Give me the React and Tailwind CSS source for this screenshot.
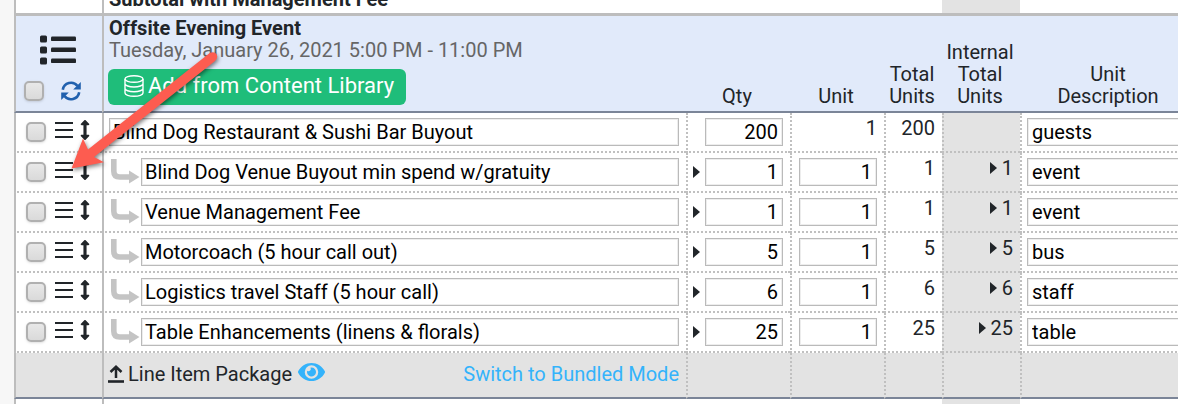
import React from 'react';
import { FaArrowsAltV, FaEye } from 'react-icons/fa';

const items = [
  { id: 1, name: 'Blind Dog Restaurant & Sushi Bar Buyout', qty: '200', unit: '1', total: '200', desc: 'guests', parent: true },
  { id: 2, name: 'Blind Dog Venue Buyout min spend w/gratuity', qty: '1', unit: '1', total: '1', desc: 'event' },
  { id: 3, name: 'Venue Management Fee', qty: '1', unit: '1', total: '1', desc: 'event' },
  { id: 4, name: 'Motorcoach (5 hour call out)', qty: '5', unit: '1', total: '5', desc: 'bus' },
  { id: 5, name: 'Logistics travel Staff (5 hour call)', qty: '6', unit: '1', total: '6', desc: 'staff' },
  { id: 6, name: 'Table Enhancements (linens & florals)', qty: '25', unit: '1', total: '25', desc: 'table' }
];

const field = 'block h-7 border border-[#bababa] bg-white text-black shadow-[inset_0_0_0_1px_#ededed] outline-none';
const solid = 'border-l-2 border-[#bdbdbd]';
const dotted = 'border-l-2 border-l-[#c0c0c0] [border-left-style:dotted]';
const rowLine = 'border-b-2 border-b-[#c0c0c0] [border-bottom-style:dotted]';
const headLine = 'border-b-2 border-b-[#7b8598]';

const Tick = ({ label }) => (
  <input
    type="checkbox"
    aria-label={label}
    className="size-5 shrink-0 appearance-none rounded-[5px] border-2 border-[#b0b0b0] bg-linear-to-b from-[#e8e8e8] to-[#dadada] shadow-sm"
  />
);

const Caret = () => (
  <svg viewBox="0 0 7 12" className="h-3 w-[7px] shrink-0 fill-[#212529]" aria-hidden="true">
    <path d="M0 0L7 6L0 12Z" />
  </svg>
);

const ListIcon = () => (
  <svg viewBox="0 0 36 30" className="h-[30px] w-9 fill-[#212529]" aria-hidden="true">
    {[2, 13, 24].map((y) => (
      <g key={y}>
        <rect x="0" y={y - 1.5} width="7" height="7" rx="1.5" />
        <rect x="11" y={y - 0.5} width="25" height="4.6" rx="1.2" />
      </g>
    ))}
  </svg>
);

const RefreshIcon = () => (
  <svg viewBox="0 0 20 20" className="size-5" aria-hidden="true">
    <path d="M1.800 8.800A8.300 8.300 0 0 1 16.500 5M18.200 11.200A8.300 8.300 0 0 1 3.500 15" fill="none" stroke="#2161ae" strokeWidth="2.600" />
    <path d="M19.800 1v7.600h-7.600zM0.200 19v-7.600h7.600z" fill="#2161ae" />
  </svg>
);

const BarsIcon = () => (
  <svg viewBox="0 0 18 16" className="h-4 w-[18px] fill-[#212529]" aria-hidden="true">
    <path d="M0 0h18v2H0zM0 7h18v2H0zM0 14h18v2H0z" />
  </svg>
);

const DatabaseIcon = () => (
  <svg viewBox="0 0 20 22" className="h-[22px] w-5 shrink-0 fill-none stroke-white" strokeWidth="1.4" aria-hidden="true">
    <ellipse cx="10" cy="4" rx="9" ry="3.3" />
    <path d="M1 4v14c0 1.800 4 3.300 9 3.300s9-1.500 9-3.300V4M1 8.700c0 1.800 4 3.300 9 3.300s9-1.500 9-3.300M1 13.400c0 1.800 4 3.300 9 3.300s9-1.500 9-3.300" />
  </svg>
);

const ChildArrow = () => (
  <svg viewBox="0 0 31 27" className="h-[27px] w-[31px] shrink-0" aria-hidden="true">
    <path d="M4.800 0v12q0 6 6 6H21" fill="none" stroke="#c4c4c4" strokeWidth="5.600" />
    <path d="M20 11.500L30.500 18L20 24.500z" fill="#c4c4c4" />
  </svg>
);

const UploadIcon = () => (
  <svg viewBox="0 0 16 18" className="h-[18px] w-4 shrink-0" fill="none" stroke="#212529" aria-hidden="true">
    <path d="M8 13V2M2.500 7L8 1.800L13.500 7" strokeWidth="2.500" />
    <path d="M0 16.500h16" strokeWidth="2.600" />
  </svg>
);

const Pointer = () => (
  <svg viewBox="0 0 160 130" className="pointer-events-none absolute left-[65px] top-[48px] h-[130px] w-[160px] drop-shadow-[1px_2px_2px_rgba(0,0,0,0.5)]" aria-hidden="true">
    <path d="M6.500 120.500L18 90.500L23 101.500L145 4.800Q149 3 151.500 6Q153.500 10 150 13L29 109L39 114.300Z" fill="#fd5c50" />
  </svg>
);

const LineItem = ({ item }) => (
  <tr className="h-10">
    <td className={`${solid} ${rowLine} pl-[10px]`}>
      <div className="flex items-center pb-px">
        <Tick label={`Select ${item.name}`} />
        <button type="button" aria-label="Options" className="ml-[9px] mb-[3px]">
          <BarsIcon />
        </button>
        <button type="button" aria-label="Move" className="ml-1 mb-[3px]">
          <FaArrowsAltV className="h-5 w-4 text-[#212529]" />
        </button>
      </div>
    </td>
    <td className={`${solid} ${rowLine} pr-[7px] pl-[5px]`}>
      <div className="flex items-center">
        {!item.parent && <div className="w-8 shrink-0"><ChildArrow /></div>}
        <input aria-label="Item name" defaultValue={item.name} className={`${field} w-full min-w-0 flex-1 px-[3px]`} />
      </div>
    </td>
    <td className={`${dotted} ${rowLine} pr-[7px] pl-[5px]`}>
      <div className="flex items-center justify-end gap-[5px]">
        {!item.parent && <Caret />}
        <input aria-label="Qty" defaultValue={item.qty} className={`${field} w-[78px] px-1 text-right`} />
      </div>
    </td>
    <td className={`${dotted} ${rowLine} px-[7px] ${item.parent ? 'pb-2 text-right' : ''}`}>
      {item.parent ? item.unit : <input aria-label="Unit" defaultValue={item.unit} className={`${field} w-full px-1 text-right`} />}
    </td>
    <td className={`${dotted} ${rowLine} pr-[7px] pb-2 text-right`}>{item.total}</td>
    <td className={`${dotted} ${rowLine} bg-[#e3e3e3] pr-[7px] pb-2`}>
      {!item.parent && (
        <div className="flex items-center justify-end gap-[5px]">
          <Caret />
          {item.total}
        </div>
      )}
    </td>
    <td className={`${dotted} ${rowLine} px-[5px]`}>
      <input aria-label="Unit description" defaultValue={item.desc} className={`${field} w-full px-1`} />
    </td>
  </tr>
);

const App = () => (
  <div className="relative overflow-hidden bg-[#f7f7f7] pl-[14px] font-[Roboto,sans-serif] text-[20px] leading-[22px] text-[#212529]">
    <table className="w-full min-w-[1182px] table-fixed border-separate border-spacing-0 bg-white">
      <colgroup>
        <col className="w-[88px]" />
        <col />
        <col className="w-[104px]" />
        <col className="w-[94px]" />
        <col className="w-[58px]" />
        <col className="w-[78px]" />
        <col className="w-[176px]" />
      </colgroup>
      <tbody>
        <tr>
          <td className={`${solid} border-b-[3px]`}></td>
          <td className={`${solid} border-b-[3px] pl-[5px]`}>
            <div className="flex h-[13px] items-end overflow-hidden pb-[3px]">
              <strong className="font-bold">Subtotal with Management Fee</strong>
            </div>
          </td>
          <td colSpan={3} className="border-b-[3px] border-[#bdbdbd]"></td>
          <td className="border-b-[3px] border-[#bdbdbd] bg-[#e3e3e3]"></td>
          <td className="border-b-[3px] border-[#bdbdbd]"></td>
        </tr>
        <tr className="bg-[#e1eafa] align-bottom">
          <td className={`${solid} ${headLine} px-2 pb-[10px]`}>
            <div className="flex justify-center pr-[2px]">
              <ListIcon />
            </div>
            <div className="mt-4 flex items-center gap-[17px]">
              <Tick label="Select all items" />
              <button type="button" aria-label="Refresh">
                <RefreshIcon />
              </button>
            </div>
          </td>
          <td className={`${solid} ${headLine} pt-px pb-[6px] pl-[4px] text-left`}>
            <div className="pl-px font-bold">Offsite Evening Event</div>
            <div className="pl-px text-[#666666]">Tuesday, January 26, 2021 5:00 PM - 11:00 PM</div>
            <button type="button" className="mt-2 flex h-9 items-center gap-1 rounded-md bg-[#1fbd7a] pr-3 pb-[2px] pl-4 text-[22px] text-white">
              <DatabaseIcon />
              Add from Content Library
            </button>
          </td>
          <th scope="col" className={`${headLine} pr-[2px] pb-1 font-normal`}>Qty</th>
          <th scope="col" className={`${headLine} pr-[2px] pb-1 font-normal`}>Unit</th>
          <th scope="col" className={`${headLine} pr-[2px] pb-1 font-normal`}>Total Units</th>
          <th scope="col" className={`${headLine} pr-[2px] pb-1 font-normal`}>Internal Total Units</th>
          <th scope="col" className={`${headLine} px-6 pb-1 font-normal`}>Unit Description</th>
        </tr>
        {items.map((item) => (
          <LineItem key={item.id} item={item} />
        ))}
        <tr className="h-[46px] bg-[#e3e3e3]">
          <td className={`${solid} ${headLine}`}></td>
          <td className={`${solid} ${headLine} pr-[7px] pb-[3px] pl-1`}>
            <div className="flex items-center">
              <UploadIcon />
              <span className="ml-1">Line Item Package</span>
              <button type="button" aria-label="Preview package" className="ml-[6px] mb-[3px]">
                <FaEye className="h-6 w-[27px] text-[#34b3fb]" />
              </button>
              <a href="#bundled" className="ml-auto text-[#34b3fb]">Switch to Bundled Mode</a>
            </div>
          </td>
          <td className={`${dotted} ${headLine}`}></td>
          <td className={`${dotted} ${headLine}`}></td>
          <td className={`${dotted} ${headLine}`}></td>
          <td className={`${dotted} ${headLine}`}></td>
          <td className={`${dotted} ${headLine}`}></td>
        </tr>
        <tr className="h-[5px]">
          <td className={solid}></td>
          <td className={solid}></td>
          <td colSpan={3}></td>
          <td className="bg-[#e3e3e3]"></td>
          <td></td>
        </tr>
      </tbody>
    </table>
    <Pointer />
  </div>
);

export default App;
